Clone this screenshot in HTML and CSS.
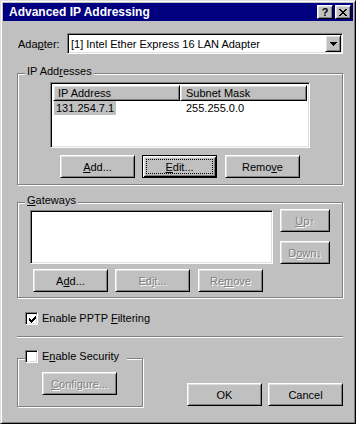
FILE: index.html
```html
<!DOCTYPE html>
<html lang="en">
<head>
    <meta charset="UTF-8">
    <meta name="viewport" content="width=device-width, initial-scale=1.0">
    <title>Advanced IP Addressing</title>
    <link rel="stylesheet" href="styles.css">
</head>
<body>

    <div class="window">
        <div class="titlebar">
            <span class="title">Advanced IP Addressing</span>
            <div class="caption-buttons">
                <span class="cap-btn raised help">?</span>
                <span class="cap-btn raised">
                    <svg width="8" height="7" viewBox="0 0 8 7" shape-rendering="crispEdges">
                        <path d="M0 0h2v1h-2zM1 1h2v1h-2zM2 2h2v1h-2zM3 3h2v1h-2zM2 4h2v1h-2zM1 5h2v1h-2zM0 6h2v1h-2zM6 0h2v1h-2zM5 1h2v1h-2zM4 2h2v1h-2zM4 4h2v1h-2zM5 5h2v1h-2zM6 6h2v1h-2z" fill="#000"/>
                    </svg>
                </span>
            </div>
        </div>

        <div class="content">
            <div class="adapter-row">
                <span class="adapter-label">Ada<u>p</u>ter:</span>
                <div class="combo sunken">
                    <span class="combo-text">[1] Intel Ether Express 16 LAN Adapter</span>
                    <span class="combo-btn raised">
                        <svg width="7" height="4" viewBox="0 0 7 4" shape-rendering="crispEdges">
                            <path d="M0 0h7v1h-7zM1 1h5v1h-5zM2 2h3v1h-3zM3 3h1v1h-1z" fill="#000"/>
                        </svg>
                    </span>
                </div>
            </div>

            <div class="group ip-group">
                <span class="group-label">IP Add<u>r</u>esses</span>
                <div class="listview sunken">
                    <div class="lv-header">
                        <span class="lv-col raised">IP Address</span>
                        <span class="lv-col raised second">Subnet Mask</span>
                    </div>
                    <div class="lv-row">
                        <span class="lv-cell"><span class="selected">131.254.7.1</span></span>
                        <span class="lv-cell second">255.255.0.0</span>
                    </div>
                </div>
                <div class="btn-row ip-buttons">
                    <button class="btn"><u>A</u>dd...</button>
                    <button class="btn default"><u>E</u>dit...</button>
                    <button class="btn wide-gap">Remo<u>v</u>e</button>
                </div>
            </div>

            <div class="group gw-group">
                <span class="group-label"><u>G</u>ateways</span>
                <div class="gw-top">
                    <div class="gw-list sunken"></div>
                    <div class="gw-side">
                        <button class="btn small disabled"><u>U</u>p↑</button>
                        <button class="btn small disabled">D<u>o</u>wn↓</button>
                    </div>
                </div>
                <div class="btn-row gw-buttons">
                    <button class="btn">A<u>d</u>d...</button>
                    <button class="btn disabled">Ed<u>i</u>t...</button>
                    <button class="btn narrow wide-gap disabled">Re<u>m</u>ove</button>
                </div>
            </div>

            <div class="check-row pptp">
                <span class="check sunken">
                    <svg width="7" height="7" viewBox="0 0 7 7" shape-rendering="crispEdges">
                        <path d="M0 2h1v3h-1zM1 3h1v3h-1zM2 4h1v3h-1zM3 3h1v3h-1zM4 2h1v3h-1zM5 1h1v3h-1zM6 0h1v3h-1z" fill="#000"/>
                    </svg>
                </span>
                <span class="check-text">Enable PPTP <u>F</u>iltering</span>
            </div>

            <div class="separator"></div>

            <div class="bottom-row">
                <div class="group security-group">
                    <span class="group-label check-row">
                        <span class="check sunken"></span>
                        <span class="check-text">E<u>n</u>able Security</span>
                    </span>
                    <button class="btn disabled"><u>C</u>onfigure...</button>
                </div>
                <div class="dialog-buttons">
                    <button class="btn">OK</button>
                    <button class="btn">Cancel</button>
                </div>
            </div>
        </div>
    </div>

</body>
</html>
```

FILE: styles.css
```css
body {
    margin: 0;
    background: #ffffff;
    font-family: "Liberation Sans", Arial, sans-serif;
    font-size: 11px;
    color: #000;
}
.window {
    width: 356px;
    height: 424px;
    box-sizing: border-box;
    padding: 2px;
    background: #c0c0c0;
    border: 1px solid;
    border-color: #dfdfdf #000 #000 #dfdfdf;
    box-shadow: inset 1px 1px #fff, inset -1px -1px #808080;
}
.raised {
    box-sizing: border-box;
    background: #c0c0c0;
    border: 1px solid;
    border-color: #fff #000 #000 #fff;
    box-shadow: inset 1px 1px #dfdfdf, inset -1px -1px #808080;
}
.sunken {
    box-sizing: border-box;
    background: #fff;
    border: 1px solid;
    border-color: #808080 #fff #fff #808080;
    box-shadow: inset 1px 1px #000, inset -1px -1px #dfdfdf;
}

/* title bar */
.titlebar {
    height: 18px;
    display: flex;
    align-items: center;
    padding: 0 2px 0 6px;
    background: #000080;
    color: #fff;
    font-size: 12px;
    font-weight: bold;
}
.title {
    flex: 1;
}
.caption-buttons {
    display: flex;
    gap: 2px;
}
.cap-btn {
    width: 16px;
    height: 14px;
    display: flex;
    align-items: center;
    justify-content: center;
    color: #000;
}
.help {
    font-size: 11px;
    line-height: 1;
    padding-top: 1px;
}

/* content */
.content {
    padding: 0 10px 0 14px;
}
.adapter-row {
    display: flex;
    align-items: center;
    margin-top: 12px;
    height: 21px;
}
.adapter-label {
    margin-left: 1px;
}
.combo {
    margin-left: auto;
    width: 276px;
    height: 21px;
    display: flex;
    align-items: center;
    padding: 1px;
}
.combo-text {
    flex: 1;
    padding-left: 2px;
}
.combo-btn {
    width: 16px;
    height: 17px;
    display: flex;
    align-items: center;
    justify-content: center;
}

/* group boxes */
.group {
    position: relative;
    box-sizing: border-box;
    border: 1px solid #808080;
    box-shadow: inset 1px 1px #fff, 1px 1px #fff;
}
.group-label {
    position: absolute;
    top: -9px;
    left: 7px;
    padding: 0 2px;
    line-height: 13px;
    background: #c0c0c0;
}
.ip-group {
    margin-top: 19px;
    height: 112px;
    padding: 8px 0 0 32px;
}
.listview {
    width: 260px;
    height: 66px;
    padding: 2px;
}
.lv-header, .lv-row {
    display: grid;
    grid-template-columns: 127px 1fr;
}
.lv-col {
    height: 16px;
    line-height: 14px;
    padding-left: 4px;
}
.lv-col.second {
    padding-left: 5px;
}
.lv-row {
    line-height: 14px;
}
.lv-cell.second {
    padding-left: 6px;
}
.selected {
    margin-left: 1px;
    padding: 0 2px;
    background: #c0c0c0;
    display: inline-block;
}

/* buttons */
.btn {
    width: 75px;
    height: 23px;
    padding: 0;
    font-family: "Liberation Sans", Arial, sans-serif;
    font-size: 11px;
    color: #000;
    background: #c0c0c0;
    border: 1px solid;
    border-color: #fff #000 #000 #fff;
    box-shadow: inset 1px 1px #dfdfdf, inset -1px -1px #808080;
}
.btn.default {
    border-color: #000;
    box-shadow: inset 1px 1px #fff, inset -1px -1px #000, inset 2px 2px #dfdfdf, inset -2px -2px #808080;
    outline: 1px dotted #000;
    outline-offset: -5px;
}
.btn.disabled {
    color: #808080;
    text-shadow: 1px 1px 0 #fff;
}
.btn.small {
    width: 50px;
}
.btn.narrow {
    width: 65px;
}
.btn-row {
    display: flex;
    gap: 7px;
}
.btn.wide-gap {
    margin-left: 1px;
}
.ip-buttons {
    margin: 7px 0 0 10px;
}

.gw-group {
    margin-top: 17px;
    height: 96px;
    padding: 6px 0 0 12px;
}
.gw-top {
    display: flex;
}
.gw-list {
    width: 243px;
    height: 54px;
    margin-top: 1px;
}
.gw-side {
    margin-left: 7px;
    display: flex;
    flex-direction: column;
    gap: 9px;
}
.gw-buttons {
    margin: 5px 0 0 3px;
}

/* check boxes */
.check-row {
    display: flex;
    align-items: center;
}
.check {
    width: 13px;
    height: 13px;
    padding: 3px 0 0 3px;
}
.check svg {
    display: block;
}
.check-text {
    margin-left: 4px;
    line-height: 13px;
}
.pptp {
    margin: 14px 0 0 8px;
}
.separator {
    margin-top: 11px;
    border-top: 1px solid #808080;
    border-bottom: 1px solid #fff;
}
.bottom-row {
    display: flex;
    margin-top: 20px;
}
.security-group {
    width: 126px;
    height: 49px;
    padding: 13px 0 0 24px;
}
.security-group .group-label {
    padding: 0 8px 0 0;
}
.dialog-buttons {
    margin: 25px 0 0 auto;
    display: flex;
    gap: 6px;
}
```
